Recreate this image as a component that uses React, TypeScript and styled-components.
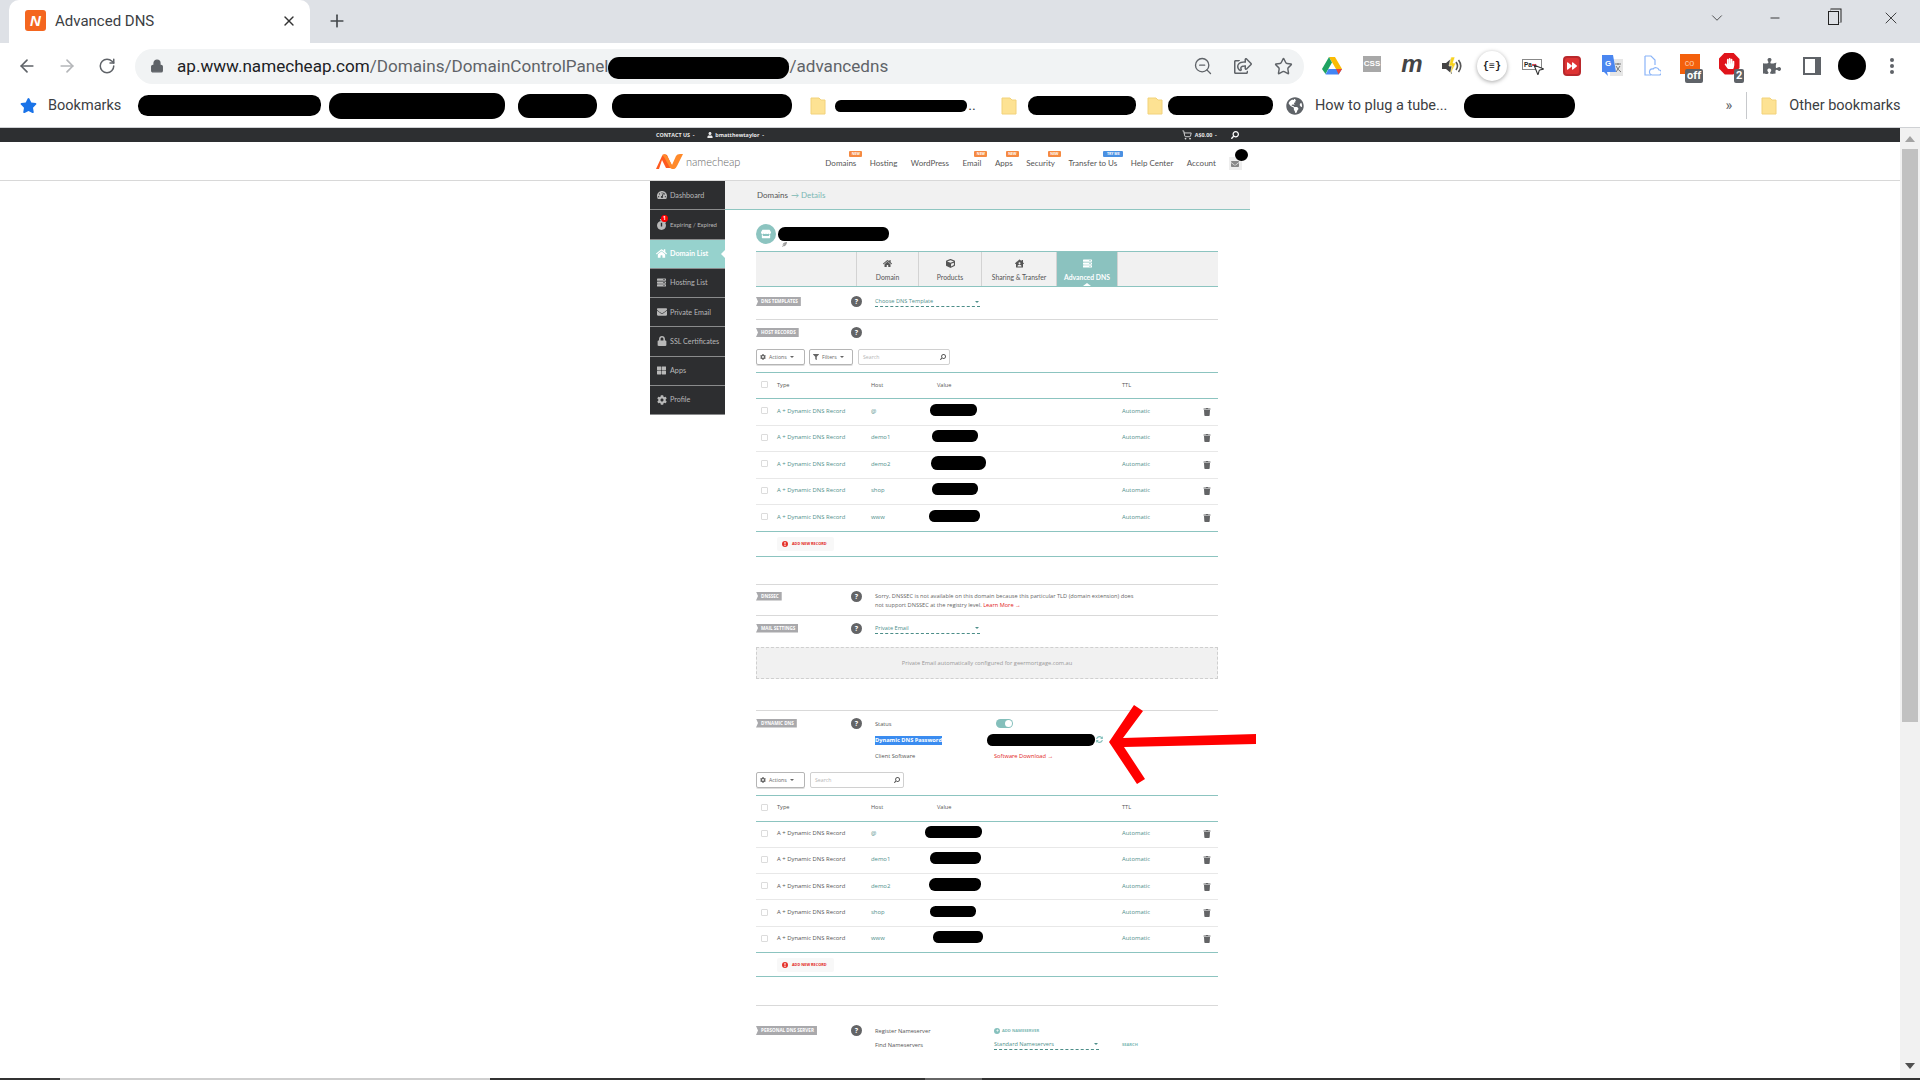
import React from "react";
import styled, { createGlobalStyle } from "styled-components";
import {
  ArrowLeft,
  ArrowRight,
  RotateCw,
  Lock,
  ZoomOut,
  Star,
  Plus,
  X,
  Minus,
  ChevronDown,
  ShoppingCart,
  MousePointer2,
} from "lucide-react";
import {
  FaStar,
  FaGlobeAmericas,
  FaPuzzlePiece,
  FaTachometerAlt,
  FaStopwatch,
  FaHome,
  FaServer,
  FaEnvelope,
  FaLock,
  FaThLarge,
  FaCog,
  FaStore,
  FaCube,
  FaHouseUser,
  FaTrash,
  FaSearch,
  FaFilter,
  FaUser,
  FaPlus,
  FaExclamation,
  FaSyncAlt,
  FaForward,
  FaHandPaper,
  FaRegShareSquare,
  FaFeatherAlt,
} from "react-icons/fa";

const GlobalStyle = createGlobalStyle`
  html, body { margin: 0; padding: 0; height: 100%; overflow: hidden; background: #fff; }
  * { box-sizing: border-box; }
`;

const Screen = styled.div`
  position: relative;
  width: 1920px;
  height: 1080px;
  display: flex;
  flex-direction: column;
  overflow: hidden;
  font-family: Lato, "Open Sans", sans-serif;
`;

/* ---- browser ---- */
const TabStrip = styled.div`
  height: 43px;
  background: #dee1e6;
  display: flex;
  align-items: stretch;
  padding-left: 9px;
  flex: none;
`;
const Tab = styled.div`
  width: 301px;
  background: #fff;
  border-radius: 10px 10px 0 0;
  display: flex;
  align-items: center;
  padding: 0 13px 2px 16px;
  font: 15px Roboto, sans-serif;
  color: #3c4043;
`;
const Favicon = styled.div`
  width: 21px;
  height: 21px;
  border-radius: 3px;
  background: #f4661f;
  color: #fff;
  font: italic bold 15px/21px "Liberation Sans", sans-serif;
  text-align: center;
  margin-right: 9px;
`;
const TabTitle = styled.span`
  flex: 1;
`;
const NewTab = styled.div`
  width: 54px;
  display: flex;
  align-items: center;
  justify-content: center;
  color: #45494d;
  padding-bottom: 2px;
`;
const WindowControls = styled.div`
  margin-left: auto;
  display: flex;
  align-items: flex-start;
`;
const WindowButton = styled.div`
  width: 58px;
  height: 36px;
  display: flex;
  align-items: center;
  justify-content: center;
  color: #222;
`;
const RestoreIcon = styled.div`
  position: relative;
  width: 11px;
  height: 14px;
  border: 1.5px solid #222;
  background: #dee1e6;
  box-shadow: 2px -2px 0 -0.5px #dee1e6, 2.5px -2.5px 0 0 #222;
`;
const Toolbar = styled.div`
  height: 41px;
  display: flex;
  align-items: center;
  background: #fff;
  padding: 5px 0 0 7px;
  flex: none;
`;
const ToolCell = styled.div<{ $faded?: boolean }>`
  width: 40px;
  height: 36px;
  flex: none;
  display: flex;
  align-items: center;
  justify-content: center;
  color: ${(p) => (p.$faded ? "#b4b6b9" : "#5f6368")};
`;
const AddressBar = styled.div`
  width: 1169px;
  height: 35px;
  margin-left: 8px;
  margin-right: 8px;
  flex: none;
  background: #f1f3f4;
  border-radius: 18px;
  display: flex;
  align-items: center;
  padding-left: 15px;
  font: 17.1px Roboto, sans-serif;
  color: #5f6368;
`;
const Url = styled.span`
  margin-left: 13px;
  white-space: nowrap;
  display: flex;
  align-items: center;
`;
const UrlHost = styled.span`
  color: #202124;
`;
const AddressActions = styled.div`
  margin-left: auto;
  display: flex;
  padding-right: 1px;
`;
const ExtensionRow = styled.div`
  display: flex;
  align-items: center;
`;
const Extension = styled.div`
  position: relative;
  width: 40px;
  height: 36px;
  display: flex;
  align-items: center;
  justify-content: center;
  color: #5f6368;
`;
const PinnedCircle = styled.div`
  width: 30px;
  height: 30px;
  border-radius: 50%;
  background: #fff;
  box-shadow: 0 1px 4px rgba(0, 0, 0, 0.35);
  font: bold 10px "Liberation Mono", monospace;
  color: #222;
  display: flex;
  align-items: center;
  justify-content: center;
`;
const CssIcon = styled.div`
  width: 18px;
  height: 16px;
  background: #a8a8a8;
  color: #fff;
  font: bold 8px/15px "Liberation Sans", sans-serif;
  text-align: center;
  margin-bottom: 4px;
  clip-path: polygon(0 0, 100% 0, 100% 100%, 70% 100%, 50% 130%, 30% 100%, 0 100%);
`;
const MozM = styled.span`
  font: italic bold 24px/1 "Liberation Sans", sans-serif;
  color: #444;
  margin-bottom: 4px;
`;
const PageRuler = styled.div`
  width: 20px;
  height: 11px;
  border: 1px solid #888;
  font: bold 6.5px/9px "Liberation Sans", sans-serif;
  color: #222;
  padding-left: 1px;
  margin-bottom: 4px;
`;
const RulerDots = styled.span`
  color: #e0141b;
`;
const RulerCursor = styled(MousePointer2)`
  position: absolute;
  left: 20px;
  top: 15px;
  fill: #fff;
  color: #333;
`;
const ForwardBox = styled.div`
  width: 18px;
  height: 20px;
  border: 2px solid #b9282c;
  border-radius: 4px;
  background: #d33;
  color: #fff;
  display: flex;
  align-items: center;
  justify-content: center;
`;
const ComBox = styled.div`
  width: 20px;
  height: 20px;
  background: #f4600c;
  color: #ffc9a8;
  font: 9px/18px "Liberation Sans", sans-serif;
  text-align: center;
  margin: 0 5px 4px 0;
`;
const StopSign = styled.div`
  width: 21px;
  height: 22px;
  background: #e0141b;
  color: #fff;
  clip-path: polygon(30% 0, 70% 0, 100% 30%, 100% 70%, 70% 100%, 30% 100%, 0 70%, 0 30%);
  display: flex;
  align-items: center;
  justify-content: center;
  margin: 0 6px 5px 0;
`;
const IconBadge = styled.span<{ $w: number }>`
  position: absolute;
  left: ${(p) => p.$w}px;
  top: 21px;
  background: #5f6368;
  color: #fff;
  border-radius: 2px;
  padding: 0 2px;
  font: bold 11px/14px Roboto, sans-serif;
`;
const Avatar = styled.div`
  width: 28px;
  height: 28px;
  border-radius: 50%;
  background: #000;
`;
const Bookmarks = styled.div`
  height: 44px;
  flex: none;
  display: flex;
  align-items: center;
  padding-left: 20px;
  background: #fff;
  border-bottom: 1px solid #cfd1d4;
  font: 14.5px Roboto, sans-serif;
  color: #3c4043;
`;
const BookmarkText = styled.span<{ $l: number }>`
  margin-left: ${(p) => p.$l}px;
  white-space: nowrap;
`;
const BookmarkGap = styled.span<{ $l: number }>`
  display: flex;
  align-items: center;
  margin-left: ${(p) => p.$l}px;
  color: #5f6368;
`;
const Separator = styled.span`
  width: 1px;
  height: 27px;
  background: #c7c9cc;
  margin-left: 14px;
`;
const Redaction = styled.span<{ $w: number; $h: number; $l?: number; $t?: number }>`
  display: inline-block;
  flex: none;
  width: ${(p) => p.$w}px;
  height: ${(p) => p.$h}px;
  margin-left: ${(p) => p.$l ?? 0}px;
  margin-top: ${(p) => p.$t ?? 0}px;
  background: #000;
  border-radius: ${(p) => p.$h / 2}px ${(p) => p.$h / 2.4}px ${(p) => p.$h / 2}px ${(p) => p.$h / 2.2}px;
`;

/* ---- page ---- */
const Viewport = styled.div`
  flex: 1;
  min-height: 0;
  display: flex;
`;
const Page = styled.div`
  flex: 1;
  min-width: 0;
  display: flex;
  flex-direction: column;
`;
const Scrollbar = styled.div`
  width: 20px;
  flex: none;
  background: #f1f1f1;
  display: flex;
  flex-direction: column;
  align-items: center;
  padding: 8px 2px 0;
`;
const ScrollArrow = styled.div<{ $down?: boolean }>`
  width: 0;
  height: 0;
  border-left: 5px solid transparent;
  border-right: 5px solid transparent;
  ${(p) => (p.$down ? "border-top: 6px solid #505050;" : "border-bottom: 6px solid #a3a3a3;")}
`;
const ScrollThumb = styled.div`
  width: 16px;
  height: 573px;
  margin-top: 7px;
  margin-bottom: 341px;
  background: #c1c1c1;
`;
const TaskStrip = styled.div`
  height: 2px;
  flex: none;
  display: flex;
  background: #333;
`;
const TaskPart = styled.div<{ $w: number; $c: string }>`
  width: ${(p) => p.$w}px;
  background: ${(p) => p.$c};
`;
const AccountBar = styled.div`
  height: 14px;
  flex: none;
  background: #2d2f31;
  color: #e8e8e8;
  font: bold 5.4px/14px "Open Sans", sans-serif;
`;
const Centered = styled.div`
  width: 600px;
  margin: 0 auto;
  display: flex;
  align-items: center;
  height: 100%;
`;
const AccountItem = styled.span<{ $l?: number }>`
  margin-left: ${(p) => p.$l ?? 0}px;
  display: flex;
  align-items: center;
  white-space: nowrap;
`;
const SiteHeader = styled.div`
  height: 39px;
  flex: none;
  border-bottom: 1px solid #d8d8d8;
`;
const LogoWord = styled.span`
  font: 300 11px Lato, sans-serif;
  color: #666;
  margin-left: 3px;
`;
const NavLinks = styled.nav`
  display: flex;
  gap: 13.5px;
  margin-left: 85px;
  padding-top: 3px;
`;
const NavLink = styled.span`
  position: relative;
  font: 8px Lato, sans-serif;
  color: #555;
  white-space: nowrap;
`;
const NavBadge = styled.span<{ $blue?: boolean }>`
  position: absolute;
  right: -6px;
  top: -7px;
  width: ${(p) => (p.$blue ? 20 : 13)}px;
  height: 6px;
  border-radius: 1px;
  background: ${(p) => (p.$blue ? "#4a90e2" : "#f58a42")};
  color: #fff;
  font: bold 3.5px/6px "Open Sans", sans-serif;
  text-align: center;
`;
const MailBox = styled.div`
  position: relative;
  width: 13px;
  height: 13px;
  margin-left: 13px;
  margin-top: 5px;
  background: #eee;
  color: #888;
  display: flex;
  align-items: center;
  justify-content: center;
`;
const MailDot = styled.span`
  position: absolute;
  right: -6px;
  top: -8px;
  width: 13px;
  height: 12px;
  border-radius: 50%;
  background: #000;
`;
const Columns = styled.div`
  width: 600px;
  margin: 0 auto;
  display: flex;
  flex: 1;
  min-height: 0;
`;
const Sidebar = styled.aside`
  width: 75px;
  flex: none;
  align-self: flex-start;
`;
const SideItem = styled.div<{ $active?: boolean }>`
  position: relative;
  height: 29.25px;
  display: flex;
  align-items: center;
  padding-left: 6px;
  gap: 3px;
  background: ${(p) => (p.$active ? "#96d2cd" : "#2d2e30")};
  color: ${(p) => (p.$active ? "#fff" : "#b8b8b8")};
  border-bottom: 1px solid #8a8b8c;
  font: ${(p) => (p.$active ? "bold" : "normal")} 7.2px Lato, sans-serif;
  white-space: nowrap;
`;
const SideIcon = styled.span`
  width: 11px;
  flex: none;
  display: flex;
  justify-content: center;
  color: inherit;
`;
const SideSmall = styled.span`
  font-size: 6px;
`;
const SideNotch = styled.span`
  position: absolute;
  right: 0;
  top: 10px;
  border-top: 4px solid transparent;
  border-bottom: 4px solid transparent;
  border-right: 4px solid #fff;
`;
const SideBadge = styled.span`
  position: absolute;
  left: 11px;
  top: 5px;
  width: 7px;
  height: 7px;
  border-radius: 50%;
  background: #f00;
  color: #fff;
  font: bold 5px/7px "Open Sans", sans-serif;
  text-align: center;
`;
const Content = styled.main`
  flex: 1;
  min-width: 0;
`;
const Breadcrumb = styled.div`
  height: 29px;
  background: #f1f1f1;
  border-bottom: 1px solid #8fc6c1;
  padding-left: 32px;
  display: flex;
  align-items: center;
  font: 8px Lato, sans-serif;
  color: #555;
  gap: 3px;
`;
const Crumb = styled.span`
  color: #79b7b3;
`;
const Inner = styled.div`
  width: 462px;
  margin-left: 31px;
`;
const DomainRow = styled.div`
  height: 41px;
  padding-top: 14px;
  display: flex;
  align-items: flex-start;
  position: relative;
`;
const DomainBadge = styled.div`
  width: 20px;
  height: 20px;
  border-radius: 50%;
  background: #8cc4c0;
  color: #fff;
  display: flex;
  align-items: center;
  justify-content: center;
`;
const DomainMark = styled(FaFeatherAlt)`
  position: absolute;
  left: 26px;
  top: 32px;
  color: #999;
`;
const TabBar = styled.div`
  height: 36px;
  display: flex;
  background: #f1f1f1;
  border-top: 1px solid #8cc4c0;
  border-bottom: 1px solid #8cc4c0;
  padding-left: 100px;
`;
const DomainTab = styled.div<{ $w: number; $active?: boolean }>`
  position: relative;
  width: ${(p) => p.$w}px;
  border-left: 1px solid #d3d3d3;
  background: ${(p) => (p.$active ? "#8bc2bf" : "transparent")};
  color: ${(p) => (p.$active ? "#fff" : "#555")};
  font: ${(p) => (p.$active ? "bold" : "normal")} 6.8px Lato, sans-serif;
  display: flex;
  flex-direction: column;
  align-items: center;
  gap: 5px;
  padding-top: 7px;
  white-space: nowrap;
  &:last-child {
    border-right: 1px solid #d3d3d3;
  }
`;
const TabCaret = styled.span`
  position: absolute;
  bottom: 0;
  left: 50%;
  margin-left: -4px;
  border-left: 4px solid transparent;
  border-right: 4px solid transparent;
  border-bottom: 3px solid #fff;
`;
const Section = styled.section<{ $h: number; $top: number; $ruled?: boolean }>`
  height: ${(p) => p.$h}px;
  padding-top: ${(p) => p.$top}px;
  display: grid;
  grid-template-columns: 95px 24px 1fr;
  align-items: start;
  ${(p) => (p.$ruled ? "border-bottom: 1px solid #d9d9d9;" : "")}
`;
const Rule = styled.div<{ $mt: number }>`
  height: 1px;
  margin-top: ${(p) => p.$mt}px;
  background: #d9d9d9;
`;
const SectionTag = styled.div`
  justify-self: start;
  height: 9px;
  background: #a9a9ac;
  color: #fff;
  font: bold 4.6px/8px "Open Sans", sans-serif;
  padding: 0 3px 0 5px;
  text-transform: uppercase;
  white-space: nowrap;
  clip-path: polygon(0 0, 100% 0, 100% 100%, 0 100%, 2px 50%);
`;
const Help = styled.div`
  width: 11px;
  height: 11px;
  margin-top: -1px;
  border-radius: 50%;
  background: #636466;
  color: #fff;
  font: bold 7px/11px "Open Sans", sans-serif;
  text-align: center;
`;
const Select = styled.div<{ $w?: number }>`
  width: ${(p) => p.$w ?? 105}px;
  height: 10px;
  border-bottom: 1px dashed #4b8d88;
  display: flex;
  justify-content: space-between;
  align-items: center;
  color: #4f8f8b;
  font: 5.6px/9px "Open Sans", sans-serif;
  &::after {
    content: "";
    border-left: 2px solid transparent;
    border-right: 2px solid transparent;
    border-top: 2px solid #4f8f8b;
    margin-right: 1px;
  }
`;
const Note = styled.p`
  margin: 0;
  color: #666;
  font: 5.65px/9px "Open Sans", sans-serif;
  white-space: nowrap;
`;
const RedLink = styled.span`
  color: #e2231a;
`;
const FieldGrid = styled.div<{ $gap: number }>`
  display: grid;
  grid-template-columns: 119px 1fr;
  grid-auto-rows: 10px;
  row-gap: ${(p) => p.$gap}px;
  align-items: center;
  color: #555;
  font: 5.7px "Open Sans", sans-serif;
`;
const FieldValue = styled.div`
  display: flex;
  align-items: center;
  gap: 1px;
  white-space: nowrap;
`;
const Selected = styled.span`
  justify-self: start;
  margin-top: 2px;
  background: #3a8cf0;
  color: #fff;
  font-weight: bold;
  line-height: 9px;
  white-space: nowrap;
`;
const Toggle = styled.span`
  display: flex;
  justify-content: flex-end;
  align-items: center;
  width: 17px;
  height: 9px;
  margin-left: 2px;
  padding-right: 1px;
  border-radius: 5px;
  background: #84bfbb;
  &::after {
    content: "";
    width: 7px;
    height: 7px;
    border-radius: 50%;
    background: #fff;
  }
`;
const AddServer = styled.span`
  display: flex;
  align-items: center;
  gap: 2px;
  color: #7cb8b4;
  font: bold 4.1px "Open Sans", sans-serif;
  text-transform: uppercase;
`;
const AddDot = styled.span`
  width: 6px;
  height: 6px;
  border-radius: 50%;
  background: #86c1bd;
  color: #fff;
  display: flex;
  align-items: center;
  justify-content: center;
`;
const SearchLink = styled.span`
  margin-left: 22px;
  color: #7cb8b4;
  font: bold 4.1px "Open Sans", sans-serif;
`;
const ActionBar = styled.div`
  height: 16px;
  display: flex;
  gap: 4px;
`;
const ActionButton = styled.div<{ $w: number }>`
  width: ${(p) => p.$w}px;
  border: 1px solid #b5b5b5;
  border-radius: 2px;
  box-shadow: 0 1px 0 #ddd;
  padding-left: 3px;
  display: flex;
  align-items: center;
  gap: 3px;
  color: #666;
  font: 5.2px "Open Sans", sans-serif;
  &::after {
    content: "";
    border-left: 2px solid transparent;
    border-right: 2px solid transparent;
    border-top: 2px solid #666;
  }
`;
const SearchBox = styled.div<{ $w: number }>`
  width: ${(p) => p.$w}px;
  margin-left: 1px;
  border: 1px solid #d0d0d0;
  border-radius: 2px;
  padding: 0 3px 0 4px;
  display: flex;
  align-items: center;
  justify-content: space-between;
  color: #b5b5b5;
  font: 5.2px "Open Sans", sans-serif;
`;
const FlippedSearch = styled(FaSearch)<{ $light?: boolean }>`
  transform: scaleX(-1);
  color: ${(p) => (p.$light ? "#fff" : "#555")};
`;
const Table = styled.div`
  margin-top: 7px;
`;
const grid = `
  display: grid;
  grid-template-columns: 21px 94px 66px 185px 81px 15px;
  align-items: center;
`;
const HeadRow = styled.div`
  ${grid}
  height: 27px;
  padding-bottom: 2px;
  border-top: 1px solid #8cc4c0;
  border-bottom: 1px solid #8cc4c0;
  color: #555;
  font: 5.6px "Open Sans", sans-serif;
`;
const Row = styled.div<{ $h: number; $last?: boolean }>`
  ${grid}
  height: ${(p) => p.$h}px;
  padding-bottom: 2px;
  border-bottom: 1px solid ${(p) => (p.$last ? "#8cc4c0" : "#e8e8e8")};
  color: #4f8f8b;
  font: 5.9px "Open Sans", sans-serif;
`;
const Check = styled.span`
  width: 7px;
  height: 7px;
  margin-left: 5px;
  border: 1px solid #dcdcdc;
  border-radius: 1px;
`;
const TypeCell = styled.span<{ $plain?: boolean }>`
  color: ${(p) => (p.$plain ? "#555" : "#4f8f8b")};
  white-space: nowrap;
`;
const TrashIcon = styled(FaTrash)`
  color: #636466;
  margin-top: 2px;
`;
const AddRow = styled.div<{ $h: number }>`
  height: ${(p) => p.$h}px;
  padding: 5px 0 0 21px;
  border-bottom: 1px solid #8cc4c0;
`;
const AddButton = styled.div`
  width: 57px;
  height: 14px;
  background: #f8f8f8;
  border-radius: 2px;
  display: flex;
  align-items: center;
  gap: 4px;
  padding-left: 5px;
  color: #e2231a;
  font: bold 3.8px "Open Sans", sans-serif;
  white-space: nowrap;
`;
const AddBadge = styled.span`
  width: 6px;
  height: 6px;
  border-radius: 50%;
  background: #e5322a;
  color: #fff;
  display: flex;
  align-items: center;
  justify-content: center;
`;
const PrivateBox = styled.div`
  height: 32px;
  background: #f1f1f1;
  border: 1px dashed #cfcfcf;
  display: flex;
  align-items: center;
  justify-content: center;
  color: #999;
  font: 5.7px "Open Sans", sans-serif;
`;
const ArrowOverlay = styled.svg`
  position: absolute;
  left: 1100px;
  top: 700px;
  width: 160px;
  height: 85px;
`;

const FolderIcon = () => (
  <svg width="16" height="18" viewBox="0 0 16 18">
    <path d="M1 1h8l2 2h4v14H1z" fill="#fde293" stroke="#f2d27a" strokeWidth="1" />
  </svg>
);

const DriveIcon = () => (
  <svg width="20" height="18" viewBox="0 0 20 18">
    <path d="M7 0h6l7 12h-6z" fill="#fbbc04" />
    <path d="M7 0l3 5.5L3.5 17 0 12z" fill="#1ea362" />
    <path d="M6.500 12H20l-3.400 5.500H3.500z" fill="#4285f4" />
    <path d="M16.600 17.500L14 12h6z" fill="#ea4335" />
  </svg>
);

const LogoMark = () => (
  <svg width="27" height="15" viewBox="0 0 27 15">
    <path d="M0 15L6 2q2-3 5-1l6 13h-7L6 6 3 15z" fill="#ff5a1f" />
    <path d="M6 1q3-2 5 1l5 9 4-9q1-2 4-2h3l-6 12q-2 4-5 3-2 0-3-3L8 3z" fill="#ff8a2b" />
  </svg>
);

const BoltSpeaker = () => (
  <svg width="24" height="24" viewBox="0 0 24 24">
    <path d="M2 9h4l6-5v16l-6-5H2z" fill="#444" />
    <path d="M11 3l-2 9h3l-2 9 6-12h-3l2-6z" fill="#f7d21e" stroke="#fff" strokeWidth="0.6" />
    <path d="M16 8q3 4 0 8M18.500 6q4.500 6 0 12" fill="none" stroke="#555" strokeWidth="1.6" />
  </svg>
);

const TranslateIcon = () => (
  <svg width="22" height="24" viewBox="0 0 22 24">
    <path d="M9 5h13v17H9z" fill="#e6e6e6" />
    <path d="M14 10h6M17 9v2M15 18l4-6M15 12q2 4 5 6" stroke="#777" strokeWidth="1" fill="none" />
    <path d="M1 1h11l3 17H6l1 4-4-4H1z" fill="#4a86f0" />
    <text x="4" y="12" fontSize="8" fontWeight="bold" fill="#fff" fontFamily="Liberation Sans">
      G
    </text>
  </svg>
);

const DocCloudIcon = () => (
  <svg width="18" height="22" viewBox="0 0 18 22" fill="none" stroke="#8ab4f8" strokeWidth="1.2">
    <path d="M2 1h6l4 4v5M2 1v19h6" />
    <path d="M9 20h7a2.500 2.500 0 0 0 0-5 3.500 3.500 0 0 0-6-1 3 3 0 0 0-1 6z" />
  </svg>
);

const SidePanelIcon = () => (
  <svg width="18" height="18" viewBox="0 0 18 18">
    <path d="M1 1h16v16H1z" fill="none" stroke="#5f6368" strokeWidth="2" />
    <path d="M12 1h5v16h-5z" fill="#5f6368" />
  </svg>
);

const MoreDots = () => (
  <svg width="4" height="18" viewBox="0 0 4 18" fill="#5f6368">
    <circle cx="2" cy="3" r="2" />
    <circle cx="2" cy="9" r="2" />
    <circle cx="2" cy="15" r="2" />
  </svg>
);

const SIDE = [
  { label: "Dashboard", icon: <FaTachometerAlt size={10} /> },
  { label: "Expiring / Expired", icon: <FaStopwatch size={11} />, badge: true, small: true },
  { label: "Domain List", icon: <FaHome size={11} />, active: true },
  { label: "Hosting List", icon: <FaServer size={9} /> },
  { label: "Private Email", icon: <FaEnvelope size={10} /> },
  { label: "SSL Certificates", icon: <FaLock size={10} /> },
  { label: "Apps", icon: <FaThLarge size={9} /> },
  { label: "Profile", icon: <FaCog size={10} /> },
];

const NAV = [
  { label: "Domains", badge: "NEW" },
  { label: "Hosting" },
  { label: "WordPress" },
  { label: "Email", badge: "NEW" },
  { label: "Apps", badge: "NEW" },
  { label: "Security", badge: "NEW" },
  { label: "Transfer to Us", badge: "TRY ME", blue: true },
  { label: "Help Center" },
  { label: "Account" },
];

const HOSTS = ["@", "demo1", "demo2", "shop", "www"];

type Blot = { w: number; h: number; l: number };

const RecordTable = ({ blots, plain, rowH, addH }: { blots: Blot[]; plain?: boolean; rowH: number; addH: number }) => (
  <Table>
    <HeadRow>
      <Check />
      <span>Type</span>
      <span>Host</span>
      <span>Value</span>
      <span>TTL</span>
    </HeadRow>
    {HOSTS.map((host, i) => (
      <Row key={host} $h={rowH} $last={i === HOSTS.length - 1}>
        <Check />
        <TypeCell $plain={plain}>A + Dynamic DNS Record</TypeCell>
        <span>{host}</span>
        <span>
          <Redaction $w={blots[i].w} $h={blots[i].h} $l={blots[i].l} />
        </span>
        <span>Automatic</span>
        <TrashIcon size={8} />
      </Row>
    ))}
    <AddRow $h={addH}>
      <AddButton>
        <AddBadge>
          <FaExclamation size={4} />
        </AddBadge>
        ADD NEW RECORD
      </AddButton>
    </AddRow>
  </Table>
);

const Tools = ({ filters, searchW }: { filters?: boolean; searchW: number }) => (
  <ActionBar>
    <ActionButton $w={49}>
      <FaCog size={6} />
      Actions
    </ActionButton>
    {filters && (
      <ActionButton $w={44}>
        <FaFilter size={6} />
        Filters
      </ActionButton>
    )}
    <SearchBox $w={searchW}>
      Search
      <FlippedSearch size={6} />
    </SearchBox>
  </ActionBar>
);

export default function App() {
  return (
    <Screen>
      <GlobalStyle />
      <TabStrip>
        <Tab>
          <Favicon>N</Favicon>
          <TabTitle>Advanced DNS</TabTitle>
          <X size={16} strokeWidth={2} color="#333" />
        </Tab>
        <NewTab>
          <Plus size={20} strokeWidth={2} />
        </NewTab>
        <WindowControls>
          <WindowButton>
            <ChevronDown size={18} strokeWidth={1} />
          </WindowButton>
          <WindowButton>
            <Minus size={14} strokeWidth={1.5} />
          </WindowButton>
          <WindowButton>
            <RestoreIcon />
          </WindowButton>
          <WindowButton>
            <X size={20} strokeWidth={1} />
          </WindowButton>
        </WindowControls>
      </TabStrip>

      <Toolbar>
        <ToolCell>
          <ArrowLeft size={20} strokeWidth={2} />
        </ToolCell>
        <ToolCell $faded>
          <ArrowRight size={20} strokeWidth={2} />
        </ToolCell>
        <ToolCell>
          <RotateCw size={18} strokeWidth={2} />
        </ToolCell>
        <AddressBar>
          <Lock size={14} fill="#5f6368" strokeWidth={2.4} />
          <Url>
            <UrlHost>ap.www.namecheap.com</UrlHost>/Domains/DomainControlPanel
            <Redaction $w={181} $h={22} $t={4} />
            /advancedns
          </Url>
          <AddressActions>
            <ToolCell>
              <ZoomOut size={20} strokeWidth={1.6} />
            </ToolCell>
            <ToolCell>
              <FaRegShareSquare size={18} />
            </ToolCell>
            <ToolCell>
              <Star size={19} strokeWidth={1.8} />
            </ToolCell>
          </AddressActions>
        </AddressBar>
        <ExtensionRow>
          <Extension>
            <DriveIcon />
          </Extension>
          <Extension>
            <CssIcon>CSS</CssIcon>
          </Extension>
          <Extension>
            <MozM>m</MozM>
          </Extension>
          <Extension>
            <BoltSpeaker />
          </Extension>
          <Extension>
            <PinnedCircle>{"{≡}"}</PinnedCircle>
          </Extension>
          <Extension>
            <PageRuler>
              Pa<RulerDots>••</RulerDots>
            </PageRuler>
            <RulerCursor size={13} />
          </Extension>
          <Extension>
            <ForwardBox>
              <FaForward size={10} />
            </ForwardBox>
          </Extension>
          <Extension>
            <TranslateIcon />
          </Extension>
          <Extension>
            <DocCloudIcon />
          </Extension>
          <Extension>
            <ComBox>co</ComBox>
            <IconBadge $w={13}>off</IconBadge>
          </Extension>
          <Extension>
            <StopSign>
              <FaHandPaper size={11} />
            </StopSign>
            <IconBadge $w={22}>2</IconBadge>
          </Extension>
          <Extension>
            <FaPuzzlePiece size={18} />
          </Extension>
          <Extension>
            <SidePanelIcon />
          </Extension>
          <Extension>
            <Avatar />
          </Extension>
          <Extension>
            <MoreDots />
          </Extension>
        </ExtensionRow>
      </Toolbar>

      <Bookmarks>
        <FaStar size={17} color="#1a73e8" />
        <BookmarkText $l={11}>Bookmarks</BookmarkText>
        <Redaction $w={183} $h={21} $l={17} />
        <Redaction $w={176} $h={26} $l={8} />
        <Redaction $w={79} $h={24} $l={13} />
        <Redaction $w={180} $h={24} $l={15} />
        <BookmarkGap $l={18}>
          <FolderIcon />
        </BookmarkGap>
        <Redaction $w={132} $h={12} $l={9} />
        <BookmarkText $l={1}>..</BookmarkText>
        <BookmarkGap $l={25}>
          <FolderIcon />
        </BookmarkGap>
        <Redaction $w={108} $h={19} $l={11} />
        <BookmarkGap $l={11}>
          <FolderIcon />
        </BookmarkGap>
        <Redaction $w={105} $h={19} $l={5} />
        <BookmarkGap $l={13}>
          <FaGlobeAmericas size={18} />
        </BookmarkGap>
        <BookmarkText $l={11}>How to plug a tube...</BookmarkText>
        <Redaction $w={111} $h={24} $l={17} />
        <BookmarkGap $l={150}>»</BookmarkGap>
        <Separator />
        <BookmarkGap $l={14}>
          <FolderIcon />
        </BookmarkGap>
        <BookmarkText $l={12}>Other bookmarks</BookmarkText>
      </Bookmarks>

      <Viewport>
        <Page>
          <AccountBar>
            <Centered>
              <AccountItem $l={6}>CONTACT US&nbsp;&nbsp;-</AccountItem>
              <AccountItem $l={12}>
                <FaUser size={6} />
                &nbsp;&nbsp;bmatthewtaylor&nbsp;&nbsp;-
              </AccountItem>
              <AccountItem $l={418}>
                <ShoppingCart size={10} />
                &nbsp;&nbsp;A$0.00&nbsp;&nbsp;-
              </AccountItem>
              <AccountItem $l={14}>
                <FlippedSearch $light size={8} />
              </AccountItem>
            </Centered>
          </AccountBar>
          <SiteHeader>
            <Centered>
              <AccountItem $l={6}>
                <LogoMark />
                <LogoWord>namecheap</LogoWord>
              </AccountItem>
              <NavLinks>
                {NAV.map((n) => (
                  <NavLink key={n.label}>
                    {n.label}
                    {n.badge && <NavBadge $blue={n.blue}>{n.badge}</NavBadge>}
                  </NavLink>
                ))}
              </NavLinks>
              <MailBox>
                <FaEnvelope size={8} />
                <MailDot />
              </MailBox>
            </Centered>
          </SiteHeader>
          <Columns>
            <Sidebar>
              {SIDE.map((s) => (
                <SideItem key={s.label} $active={s.active}>
                  <SideIcon>{s.icon}</SideIcon>
                  {s.small ? <SideSmall>{s.label}</SideSmall> : s.label}
                  {s.badge && <SideBadge>1</SideBadge>}
                  {s.active && <SideNotch />}
                </SideItem>
              ))}
            </Sidebar>
            <Content>
              <Breadcrumb>
                Domains <Crumb>→ Details</Crumb>
              </Breadcrumb>
              <Inner>
                <DomainRow>
                  <DomainBadge>
                    <FaStore size={10} />
                  </DomainBadge>
                  <Redaction $w={111} $h={14} $l={2} $t={3} />
                  <DomainMark size={5} />
                </DomainRow>
                <TabBar>
                  <DomainTab $w={62}>
                    <FaHome size={9} />
                    Domain
                  </DomainTab>
                  <DomainTab $w={63}>
                    <FaCube size={9} />
                    Products
                  </DomainTab>
                  <DomainTab $w={75}>
                    <FaHouseUser size={9} />
                    Sharing &amp; Transfer
                  </DomainTab>
                  <DomainTab $w={62} $active>
                    <FaServer size={9} />
                    Advanced DNS
                    <TabCaret />
                  </DomainTab>
                </TabBar>

                <Section $h={33} $top={10} $ruled>
                  <SectionTag>DNS Templates</SectionTag>
                  <Help>?</Help>
                  <Select>Choose DNS Template</Select>
                </Section>
                <Section $h={29} $top={8}>
                  <SectionTag>Host Records</SectionTag>
                  <Help>?</Help>
                </Section>
                <Tools filters searchW={92} />
                <RecordTable
                  rowH={26.5}
                  addH={25}
                  blots={[
                    { w: 47, h: 12, l: -7 },
                    { w: 46, h: 12, l: -5 },
                    { w: 55, h: 14, l: -6 },
                    { w: 46, h: 12, l: -5 },
                    { w: 51, h: 12, l: -8 },
                  ]}
                />
                <Rule $mt={27} />
                <Section $h={31} $top={7} $ruled>
                  <SectionTag>DNSSEC</SectionTag>
                  <Help>?</Help>
                  <Note>
                    Sorry, DNSSEC is not available on this domain because this particular TLD (domain extension) does
                    <br />
                    not support DNSSEC at the registry level. <RedLink>Learn More →</RedLink>
                  </Note>
                </Section>
                <Section $h={31} $top={8}>
                  <SectionTag>Mail Settings</SectionTag>
                  <Help>?</Help>
                  <Select>Private Email</Select>
                </Section>
                <PrivateBox>Private Email automatically configured for geermortgage.com.au</PrivateBox>
                <Rule $mt={31} />
                <Section $h={61} $top={8}>
                  <SectionTag>Dynamic DNS</SectionTag>
                  <Help>?</Help>
                  <FieldGrid $gap={6}>
                    <span>Status</span>
                    <Toggle />
                    <Selected>Dynamic DNS Password</Selected>
                    <FieldValue>
                      <Redaction $w={108} $h={12} $l={-7} />
                      <FaSyncAlt size={7} color="#86c1bd" />
                    </FieldValue>
                    <span>Client Software</span>
                    <RedLink>Software Download →</RedLink>
                  </FieldGrid>
                </Section>
                <Tools searchW={94} />
                <RecordTable
                  plain
                  rowH={26.3}
                  addH={24}
                  blots={[
                    { w: 57, h: 12, l: -12 },
                    { w: 51, h: 12, l: -7 },
                    { w: 52, h: 13, l: -8 },
                    { w: 46, h: 11, l: -7 },
                    { w: 50, h: 12, l: -4 },
                  ]}
                />
                <Rule $mt={28} />
                <Section $h={60} $top={20}>
                  <SectionTag>Personal DNS Server</SectionTag>
                  <Help>?</Help>
                  <FieldGrid $gap={4}>
                    <span>Register Nameserver</span>
                    <AddServer>
                      <AddDot>
                        <FaPlus size={3} />
                      </AddDot>
                      Add Nameserver
                    </AddServer>
                    <span>Find Nameservers</span>
                    <FieldValue>
                      <Select>Standard Nameservers</Select>
                      <SearchLink>SEARCH</SearchLink>
                    </FieldValue>
                  </FieldGrid>
                </Section>
              </Inner>
            </Content>
          </Columns>
        </Page>
        <Scrollbar>
          <ScrollArrow />
          <ScrollThumb />
          <ScrollArrow $down />
        </Scrollbar>
      </Viewport>
      <TaskStrip>
        <TaskPart $w={60} $c="#333" />
        <TaskPart $w={430} $c="#cfcfcf" />
        <TaskPart $w={435} $c="#333" />
        <TaskPart $w={57} $c="#666" />
      </TaskStrip>
      <ArrowOverlay viewBox="0 0 160 85">
        <path d="M9 42L34 5l9 6-20 27 133-4v10L24 47l21 32-8 5z" fill="#ff0000" />
      </ArrowOverlay>
    </Screen>
  );
}
